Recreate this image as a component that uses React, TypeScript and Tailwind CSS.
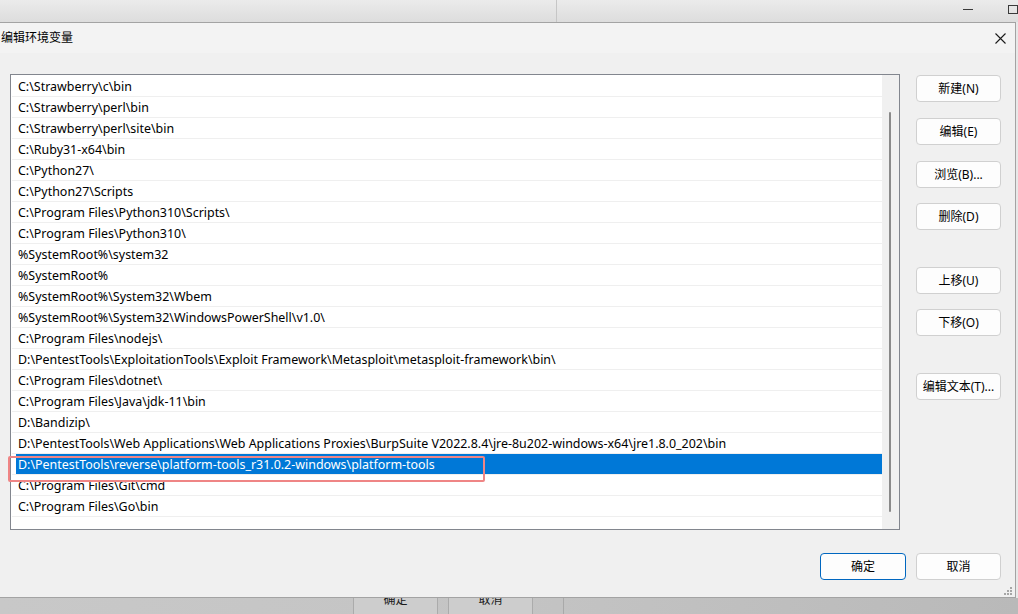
import React from "react";

const rows: string[] = [
  String.raw`C:\Strawberry\c\bin`,
  String.raw`C:\Strawberry\perl\bin`,
  String.raw`C:\Strawberry\perl\site\bin`,
  String.raw`C:\Ruby31-x64\bin`,
  String.raw`C:\Python27\ `.trim(),
  String.raw`C:\Python27\Scripts`,
  String.raw`C:\Program Files\Python310\Scripts\ `.trim(),
  String.raw`C:\Program Files\Python310\ `.trim(),
  String.raw`%SystemRoot%\system32`,
  String.raw`%SystemRoot%`,
  String.raw`%SystemRoot%\System32\Wbem`,
  String.raw`%SystemRoot%\System32\WindowsPowerShell\v1.0\ `.trim(),
  String.raw`C:\Program Files\nodejs\ `.trim(),
  String.raw`D:\PentestTools\ExploitationTools\Exploit Framework\Metasploit\metasploit-framework\bin\ `.trim(),
  String.raw`C:\Program Files\dotnet\ `.trim(),
  String.raw`C:\Program Files\Java\jdk-11\bin`,
  String.raw`D:\Bandizip\ `.trim(),
  String.raw`D:\PentestTools\Web Applications\Web Applications Proxies\BurpSuite V2022.8.4\jre-8u202-windows-x64\jre1.8.0_202\bin`,
  String.raw`D:\PentestTools\reverse\platform-tools_r31.0.2-windows\platform-tools`,
  String.raw`C:\Program Files\Git\cmd`,
  String.raw`C:\Program Files\Go\bin`,
];

const SELECTED = 18;

function Btn({ label, className = "" }: { label: string; className?: string }) {
  return (
    <div
      className={
        "w-[85px] h-[27px] rounded-[4px] border border-[#d0d0d0] bg-[#fdfdfd] flex items-center justify-center text-[12px] text-black leading-none " +
        className
      }
    >
      {label}
    </div>
  );
}

export default function App() {
  return (
    <div className="relative w-[1018px] h-[614px] overflow-hidden flex flex-col bg-[#e4e4e4] font-['Noto_Sans','Noto_Sans_CJK_SC',sans-serif] text-black">
      {/* top strip of the window behind */}
      <div className="h-[22px] flex items-start bg-gradient-to-b from-[#ebebeb] to-[#dddddd] shrink-0">
        <div className="w-[563px] h-full" />
        <div className="w-px h-full bg-[#c6c6c6]" />
        <div className="ml-[406px] mt-[9px] w-[10px] h-px bg-[#3a3a3a]" />
        <div className="ml-[35px] mt-[5px] w-[10px] h-[9px] border border-[#3a3a3a]" />
      </div>

      {/* middle: dialog */}
      <div className="flex h-[576px] shrink-0">
        <div className="relative w-[1016px] h-[576px] border-t border-r border-b border-[#a3a3a3] bg-[#f0f0f0] flex flex-col">
          {/* title bar */}
          <div className="h-[30px] bg-[#f3f3f3] flex items-center justify-between shrink-0">
            <span className="pl-[1px] text-[12px] leading-none">编辑环境变量</span>
            <svg width="11" height="11" viewBox="0 0 11 11" className="mr-[9px]">
              <path d="M0.5 0.5 L10.5 10.5 M10.5 0.5 L0.5 10.5" stroke="#1a1a1a" strokeWidth="1.1" />
            </svg>
          </div>

          {/* body */}
          <div className="flex flex-col flex-1">
            <div className="flex">
              {/* list */}
              <div className="ml-[10px] mt-[21px] w-[890px] h-[456px] border border-[#82868e] bg-white flex">
                <div className="w-[871px] pl-px pt-px flex flex-col">
                  {rows.map((r, i) => (
                    <div key={i} className="h-[21px] border-b border-[#efefef] flex">
                      <div
                        className={
                          "ml-[4px] flex-1 h-[20px] pl-[2px] text-[12.45px] leading-[21px] whitespace-nowrap overflow-hidden " +
                          (i === SELECTED ? "bg-[#0078d7] text-white" : "text-black")
                        }
                      >
                        {r}
                      </div>
                    </div>
                  ))}
                </div>
                <div className="w-[17px] bg-[#f0f0f0] pt-[37px] pl-[7px]">
                  <div className="w-[2px] h-[400px] rounded-full bg-[#8a8a8a]" />
                </div>
              </div>

              {/* right buttons */}
              <div className="ml-[16px] mt-[22px] flex flex-col">
                <Btn label="新建(N)" />
                <Btn label="编辑(E)" className="mt-[16px]" />
                <Btn label="浏览(B)..." className="mt-[16px]" />
                <Btn label="删除(D)" className="mt-[15px]" />
                <Btn label="上移(U)" className="mt-[37px]" />
                <Btn label="下移(O)" className="mt-[15px]" />
                <Btn label="编辑文本(T)..." className="mt-[37px]" />
              </div>
            </div>

            {/* bottom buttons */}
            <div className="mt-[23px] flex justify-end pr-[14px] gap-[10px]">
              <div className="w-[86px] h-[27px] rounded-[4px] border border-[#0067c0] bg-[#fdfdfd] flex items-center justify-center text-[12px] leading-none">
                确定
              </div>
              <Btn label="取消" />
            </div>
          </div>

          {/* resize grip */}
          <svg width="8" height="8" viewBox="0 0 8 8" className="absolute right-[3px] bottom-[2px]">
            <rect x="6" y="0" width="2" height="2" fill="#a6a6a6" />
            <rect x="3" y="3" width="2" height="2" fill="#a6a6a6" />
            <rect x="6" y="3" width="2" height="2" fill="#a6a6a6" />
            <rect x="0" y="6" width="2" height="2" fill="#a6a6a6" />
            <rect x="3" y="6" width="2" height="2" fill="#a6a6a6" />
            <rect x="6" y="6" width="2" height="2" fill="#a6a6a6" />
          </svg>
        </div>
        <div className="flex-1 bg-[#e8e8e8]" />
      </div>

      {/* bottom strip of the window behind */}
      <div className="h-[16px] flex items-start overflow-hidden bg-gradient-to-r from-[#c8c8c8] via-[#c4c4c4] to-[#b9b9b9] shrink-0">
        <div className="w-[353px] h-full" />
        <div className="w-[85px] h-full border-x border-[#ababab] bg-[#cdcdcd] flex justify-center">
          <span className="mt-[-4px] text-[12px] leading-[12px] text-[#1a1a1a]">确定</span>
        </div>
        <div className="w-[10px] h-full" />
        <div className="w-[85px] h-full border-x border-[#ababab] bg-[#cdcdcd] flex justify-center">
          <span className="mt-[-4px] text-[12px] leading-[12px] text-[#1a1a1a]">取消</span>
        </div>
        <div className="w-[30px] h-full" />
        <div className="w-px h-full bg-[#a9a9a9]" />
      </div>

      {/* annotation */}
      <div className="absolute left-[8px] top-[456px] w-[477px] h-[26px] border-2 border-[#ef8585] rounded-[2px]" />
    </div>
  );
}
